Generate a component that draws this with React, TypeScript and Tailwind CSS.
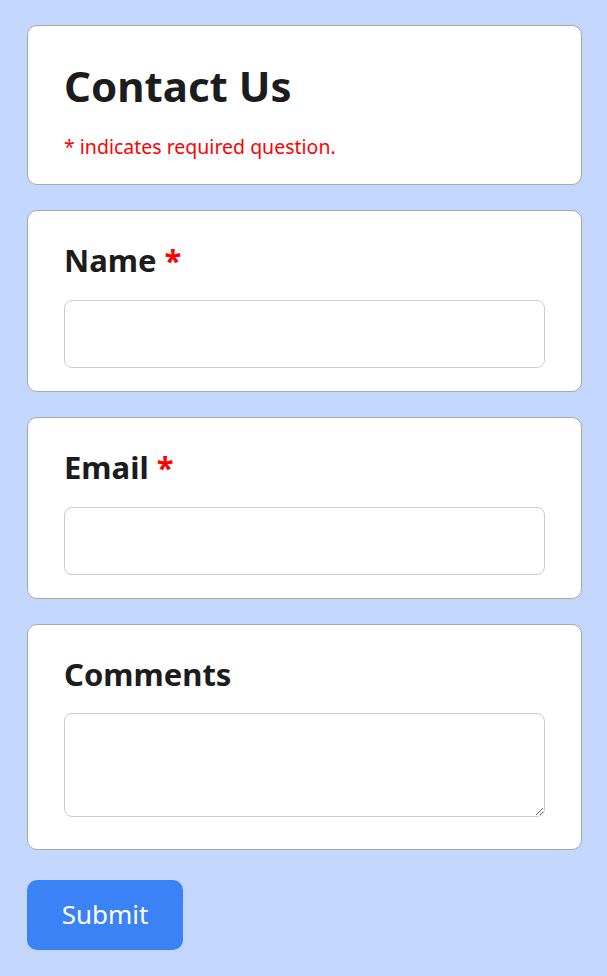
import React from 'react';

function Field({ label, required, tall }: { label: string; required?: boolean; tall?: boolean }) {
  return (
    <div className={`bg-white border border-[#a9a9a9] rounded-[10px] px-9 pt-[29px] ${tall ? 'pb-[32px]' : 'pb-[23px]'}`}>
      <label className={`block text-[31px] font-bold text-[#1c1c1c] leading-[1.3] ${tall ? 'mb-[18px]' : 'mb-[20px]'}`}>
        {label}
        {required && <span className="text-[#ff0000]"> *</span>}
      </label>
      {tall ? (
        <textarea className="block w-full h-[104px] border border-[#cccccc] rounded-[8px] px-3 py-2 text-lg outline-none" />
      ) : (
        <input type="text" className="block w-full h-[68px] border border-[#cccccc] rounded-[8px] px-3 text-lg outline-none" />
      )}
    </div>
  );
}

export default function App() {
  return (
    <div className="min-h-[976px] bg-[#c3d7fc] pl-[27px] pr-[25px] pt-[25px] pb-6" style={{ fontFamily: '"Noto Sans", "Open Sans", sans-serif' }}>
      <form className="flex flex-col gap-[25px]" onSubmit={(e) => e.preventDefault()}>
        <div className="bg-white border border-[#a9a9a9] rounded-[10px] px-9 pt-[35px] pb-[24px]">
          <h1 className="text-[42px] font-bold text-[#1c1c1c] leading-[1.2]">Contact Us</h1>
          <p className="text-[19.5px] text-[#ff0000] mt-[23px] leading-[1.3]">* indicates required question.</p>
        </div>
        <Field label="Name" required />
        <Field label="Email" required />
        <Field label="Comments" tall />
        <div className="pt-[5px]">
          <button type="submit" className="bg-[#3b82f6] text-white text-[26px] rounded-[10px] w-[156px] h-[70px]">
            Submit
          </button>
        </div>
      </form>
    </div>
  );
}
